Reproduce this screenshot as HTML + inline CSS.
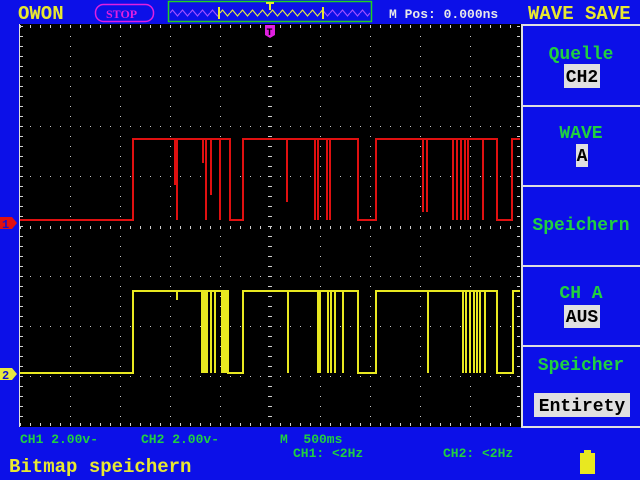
<!DOCTYPE html>
<html><head><meta charset="utf-8"><style>
html,body{margin:0;padding:0;background:#0c10e8;width:640px;height:480px;overflow:hidden}
svg{display:block}
text{font-family:"Liberation Mono",monospace;font-weight:bold}
</style></head><body>
<svg width="640" height="480" viewBox="0 0 640 480" xmlns="http://www.w3.org/2000/svg">
<defs>
<pattern id="gx" x="20" y="26" width="50" height="10" patternUnits="userSpaceOnUse"><rect x="0" y="0" width="1" height="1" fill="#c8c8c8"/></pattern>
<pattern id="gy" x="20" y="26" width="10" height="50" patternUnits="userSpaceOnUse"><rect x="0" y="0" width="1" height="1" fill="#c8c8c8"/></pattern>
<pattern id="tk" x="20" y="0" width="10" height="10" patternUnits="userSpaceOnUse"><rect x="0" y="0" width="1" height="10" fill="#d0d0d0"/></pattern>
<pattern id="tkv" x="0" y="26" width="10" height="10" patternUnits="userSpaceOnUse"><rect x="0" y="0" width="10" height="1" fill="#d0d0d0"/></pattern>
<pattern id="zzp" x="170" y="8" width="10" height="10" patternUnits="userSpaceOnUse"><path d="M0,5 L2.5,2 L7.5,8 L10,5" stroke="#a050ff" fill="none" stroke-width="1.2"/></pattern>
<pattern id="zzy" x="170" y="8" width="10" height="10" patternUnits="userSpaceOnUse"><path d="M0,5 L2.5,2 L7.5,8 L10,5" stroke="#e8e840" fill="none" stroke-width="1.2"/></pattern>
</defs>
<rect x="19" y="24" width="502" height="403" fill="#000"/>
<rect x="20" y="26" width="500" height="400" fill="url(#gx)"/>
<rect x="20" y="26" width="500" height="400" fill="url(#gy)"/>
<rect x="20" y="25" width="500" height="3" fill="url(#tk)"/>
<rect x="20" y="423" width="500" height="3" fill="url(#tk)"/>
<rect x="20" y="226" width="500" height="3" fill="url(#tk)"/>
<rect x="20" y="26" width="3" height="400" fill="url(#tkv)"/>
<rect x="517" y="26" width="3" height="400" fill="url(#tkv)"/>
<rect x="268" y="26" width="4" height="400" fill="url(#tkv)"/>
<rect x="19" y="24" width="1" height="403" fill="#e0e0e0"/>
<path d="M20,220 H133 V139 H175 V185 V139 H177 V220 V139 H203 V163 V139 H206 V220 V139 H211 V195 V139 H220 V220 V139 H230 V220 H243 V139 H287 V202 V139 H315 V220 V139 H318 V220 V139 H327 V220 V139 H330 V220 V139 H358 V220 H376 V139 H423 V212 V139 H427 V212 V139 H453 V220 V139 H457 V220 V139 H461 V220 V139 H465 V220 V139 H468 V220 V139 H483 V220 V139 H497 V220 H512 V139 H520" stroke="#e01010" stroke-width="2" fill="none"/>
<path d="M20,373 H133 V291 H177 V300 V291 H202 V373 V291 H204 V373 V291 H206 V373 V291 H207 V373 V291 H211 V373 V291 H215 V373 V291 H222 V373 V291 H224 V373 V291 H226 V373 V291 H228 V373 H243 V291 H288 V373 V291 H318 V373 V291 H320 V373 V291 H328 V373 V291 H331 V373 V291 H335 V373 V291 H343 V373 V291 H358 V373 H376 V291 H428 V373 V291 H463 V373 V291 H466 V373 V291 H470 V373 V291 H474 V373 V291 H477 V373 V291 H480 V373 V291 H485 V373 V291 H497 V373 H513 V291 H520" stroke="#e8e820" stroke-width="2" fill="none"/>
<path d="M0,217 H12 L17,223 L12,229 H0 Z" fill="#e01010"/>
<text x="2" y="228" font-size="12" fill="#1010d0">1</text>
<path d="M0,368 H12 L17,374 L12,380 H0 Z" fill="#e8e840"/>
<text x="2" y="379" font-size="12" fill="#1010d0">2</text>
<path d="M265,25 H275 V35 L270,38 L265,35 Z" fill="#e020e0"/>
<text x="266.5" y="35" font-size="10" fill="#000">T</text>
<text x="18" y="19" font-size="19" fill="#e8e830">OWON</text>
<rect x="95.5" y="4.5" width="58" height="17" rx="8" fill="none" stroke="#e020e0" stroke-width="1.5"/>
<text x="106" y="18" font-size="12" fill="#e020e0" style="font-family:'Liberation Serif',serif">STOP</text>
<rect x="168.5" y="1.5" width="203" height="20" fill="none" stroke="#20d020" stroke-width="1.5"/>
<rect x="170" y="8" width="200" height="10" fill="url(#zzp)"/>
<rect x="219" y="8" width="103" height="10" fill="#0c10e8"/>
<rect x="219" y="8" width="103" height="10" fill="url(#zzy)"/>
<rect x="218" y="7" width="2" height="12" fill="#e8e830"/>
<rect x="322" y="7" width="2" height="12" fill="#e8e830"/>
<path d="M266,3 H274 M270,3 V10" stroke="#e8e830" stroke-width="2"/>
<text x="389" y="18" font-size="13" fill="#e8e8e8">M Pos: 0.000ns</text>
<text x="528" y="19" font-size="19" fill="#e8e830">WAVE SAVE</text>
<rect x="521" y="24" width="2" height="404" fill="#e0e0e0"/>
<rect x="521" y="24" width="119" height="2" fill="#e0e0e0"/>
<rect x="521" y="105" width="119" height="2" fill="#e0e0e0"/>
<rect x="521" y="185" width="119" height="2" fill="#e0e0e0"/>
<rect x="521" y="265" width="119" height="2" fill="#e0e0e0"/>
<rect x="521" y="345" width="119" height="2" fill="#e0e0e0"/>
<rect x="521" y="426" width="119" height="2" fill="#e0e0e0"/>
<g font-size="18" fill="#20d040" text-anchor="middle">
<text x="581" y="59">Quelle</text>
<text x="581" y="138">WAVE</text>
<text x="581" y="230">Speichern</text>
<text x="581" y="298">CH A</text>
<text x="581" y="370">Speicher</text>
</g>
<rect x="564" y="64" width="36" height="24" fill="#e0e0e0"/>
<rect x="576" y="144" width="12" height="23" fill="#e0e0e0"/>
<rect x="564" y="305" width="36" height="23" fill="#e0e0e0"/>
<rect x="534" y="393" width="96" height="24" fill="#e0e0e0"/>
<g font-size="18" fill="#000" text-anchor="middle">
<text x="582" y="82">CH2</text>
<text x="582" y="161">A</text>
<text x="582" y="322">AUS</text>
<text x="582" y="411">Entirety</text>
</g>
<g font-size="13" fill="#20d040">
<text x="20" y="443">CH1 2.00v-</text>
<text x="141" y="443">CH2 2.00v-</text>
<text x="280" y="443">M&#160; 500ms</text>
<text x="293" y="457">CH1: &lt;2Hz</text>
<text x="443" y="457">CH2: &lt;2Hz</text>
</g>
<text x="9" y="472" font-size="19" fill="#e8e830">Bitmap speichern</text>
<rect x="584" y="450" width="7" height="4" fill="#e8e820"/>
<rect x="580" y="453" width="15" height="21" fill="#e8e820"/>
</svg>
</body></html>
